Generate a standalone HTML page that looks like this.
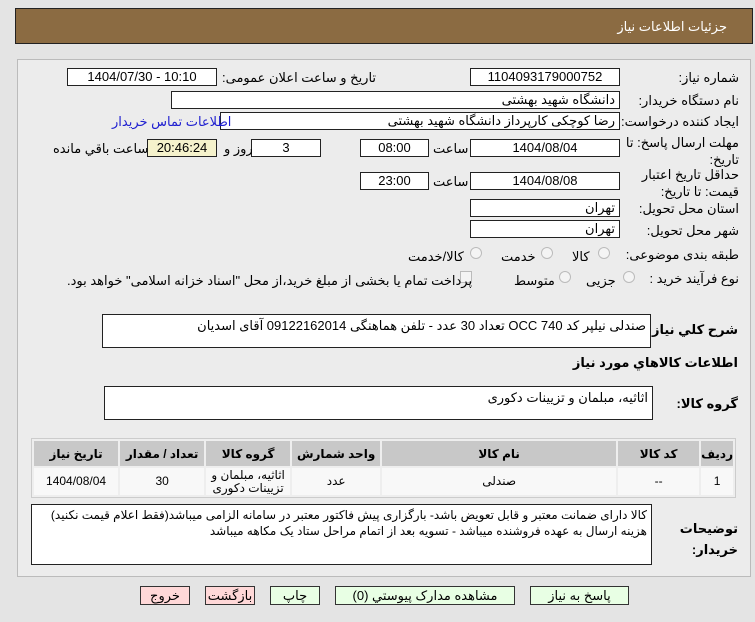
<!DOCTYPE html>
<html><head><meta charset="utf-8"><style>
*{box-sizing:border-box;margin:0;padding:0}
body{width:755px;height:622px;background:#e4e4e4;font-family:"Liberation Sans","DejaVu Sans",sans-serif;font-size:13px;color:#000;position:relative;overflow:hidden}
.a{position:absolute;white-space:nowrap}
.hd{left:15px;top:8px;width:738px;height:36px;background:#8b6b42;border:1px solid #222}
.pn{left:17px;top:59px;width:734px;height:518px;background:#ececec;border:1px solid #bbb}
.in{position:absolute;background:#fff;border:1px solid #222;height:18px;line-height:16px;padding:0 4px;text-align:center;white-space:nowrap}
.r{text-align:right;direction:rtl}
.l{direction:rtl;text-align:right}
.rad{position:absolute;width:12px;height:12px;border-radius:50%;border:1px solid #bbb;background:#f4f4f4}
.btn{position:absolute;top:586px;height:19px;border:1px solid #333;background:#e8ffe4;text-align:center;line-height:17px;direction:rtl}
.pk{background:#ffd8d8}
table{position:absolute;left:31px;top:438px;width:705px;border-collapse:separate;border-spacing:2px;border:1px solid #ccc;background:#eee;direction:rtl}
th{background:#c8c8c8;height:25px;font-size:12px}
td{background:#f8f8f8;height:27px;text-align:center;font-size:12px;line-height:13px}
.ta{position:absolute;background:#fff;border:1px solid #222;direction:rtl;text-align:right;padding:3px 4px}
</style></head><body>
<div class="a hd"></div>
<div class="a" style="right:28px;top:19px;color:#fff;font-size:13px;direction:rtl">جزئیات اطلاعات نیاز</div>
<div class="a pn"></div>

<div class="a l" style="right:16px;top:70px">شماره نیاز:</div>
<div class="in" style="left:470px;top:68px;width:150px">1104093179000752</div>
<div class="a l" style="left:222px;top:70px">تاریخ و ساعت اعلان عمومی:</div>
<div class="in" style="left:67px;top:68px;width:150px">1404/07/30 - 10:10</div>

<div class="a l" style="right:16px;top:93px">نام دستگاه خریدار:</div>
<div class="in r" style="left:171px;top:91px;width:449px">دانشگاه شهید بهشتی</div>

<div class="a l" style="right:16px;top:114px">ایجاد کننده درخواست:</div>
<div class="in r" style="left:220px;top:112px;width:400px">رضا کوچکی کارپرداز دانشگاه شهید بهشتی</div>
<div class="a l" style="left:112px;top:114px;color:#2020d0">اطلاعات تماس خریدار</div>

<div class="a l" style="right:16px;top:134px;line-height:17px">مهلت ارسال پاسخ: تا<br>تاریخ:</div>
<div class="in" style="left:470px;top:139px;width:150px">1404/08/04</div>
<div class="a l" style="left:433px;top:141px">ساعت</div>
<div class="in" style="left:360px;top:139px;width:69px">08:00</div>
<div class="in" style="left:251px;top:139px;width:70px">3</div>
<div class="a l" style="left:224px;top:141px">روز و</div>
<div class="in" style="left:147px;top:139px;width:70px;background:#f5f2cc">20:46:24</div>
<div class="a l" style="left:53px;top:141px">ساعت باقي مانده</div>

<div class="a l" style="right:16px;top:166px;line-height:17px">حداقل تاریخ اعتبار<br>قیمت: تا تاریخ:</div>
<div class="in" style="left:470px;top:172px;width:150px">1404/08/08</div>
<div class="a l" style="left:433px;top:174px">ساعت</div>
<div class="in" style="left:360px;top:172px;width:69px">23:00</div>

<div class="a l" style="right:16px;top:201px">استان محل تحویل:</div>
<div class="in r" style="left:470px;top:199px;width:150px">تهران</div>
<div class="a l" style="right:16px;top:223px">شهر محل تحویل:</div>
<div class="in r" style="left:470px;top:220px;width:150px">تهران</div>

<div class="a l" style="right:16px;top:247px">طبقه بندی موضوعی:</div>
<div class="rad" style="left:598px;top:247px"></div><div class="a l" style="left:572px;top:249px">کالا</div>
<div class="rad" style="left:541px;top:247px"></div><div class="a l" style="left:501px;top:249px">خدمت</div>
<div class="rad" style="left:470px;top:247px"></div><div class="a l" style="left:408px;top:249px">کالا/خدمت</div>

<div class="a l" style="right:16px;top:271px">نوع فرآیند خرید :</div>
<div class="rad" style="left:623px;top:271px"></div><div class="a l" style="left:586px;top:273px">جزیی</div>
<div class="rad" style="left:559px;top:271px"></div><div class="a l" style="left:514px;top:273px">متوسط</div>
<div class="a" style="left:460px;top:271px;width:12px;height:12px;border:1px solid #bbb;background:#f4f4f4"></div>
<div class="a l" style="left:67px;top:273px">پرداخت تمام یا بخشی از مبلغ خرید،از محل "اسناد خزانه اسلامی" خواهد بود.</div>

<div class="a l" style="right:17px;top:322px;font-weight:bold">شرح کلي نیاز:</div>
<div class="ta" style="left:102px;top:314px;width:549px;height:34px">صندلی نیلپر کد OCC 740 تعداد 30 عدد - تلفن هماهنگی 09122162014 آقای اسدیان</div>
<div class="a l" style="right:17px;top:355px;font-weight:bold">اطلاعات کالاهاي مورد نیاز</div>
<div class="a l" style="right:17px;top:396px;font-weight:bold">گروه کالا:</div>
<div class="ta" style="left:104px;top:386px;width:549px;height:34px">اثاثیه، مبلمان و تزیینات دکوری</div>

<table>
<tr><th style="width:27px">ردیف</th><th style="width:81px">کد کالا</th><th style="width:234px">نام کالا</th><th style="width:88px">واحد شمارش</th><th style="width:84px">گروه کالا</th><th style="width:84px">تعداد / مقدار</th><th>تاریخ نیاز</th></tr>
<tr><td>1</td><td>--</td><td>صندلی</td><td>عدد</td><td>اثاثیه، مبلمان و<br>تزیینات دکوری</td><td>30</td><td>1404/08/04</td></tr>
</table>

<div class="a l" style="right:17px;top:518px;font-weight:bold;line-height:21px">توضیحات<br>خریدار:</div>
<div class="ta" style="left:31px;top:504px;width:621px;height:61px;line-height:16px;padding-top:2px;font-size:12px">کالا دارای ضمانت معتبر و قابل تعویض باشد- بارگزاری پیش فاکتور معتبر در سامانه الزامی میباشد(فقط اعلام قیمت نکنید) هزینه ارسال به عهده فروشنده میباشد - تسویه بعد از اتمام مراحل ستاد یک مکاهه میباشد</div>

<div class="btn" style="left:530px;width:99px">پاسخ به نیاز</div>
<div class="btn" style="left:335px;width:180px">مشاهده مدارک پیوستي (0)</div>
<div class="btn" style="left:270px;width:50px">چاپ</div>
<div class="btn pk" style="left:205px;width:50px">بازگشت</div>
<div class="btn pk" style="left:140px;width:50px">خروج</div>
</body></html>
